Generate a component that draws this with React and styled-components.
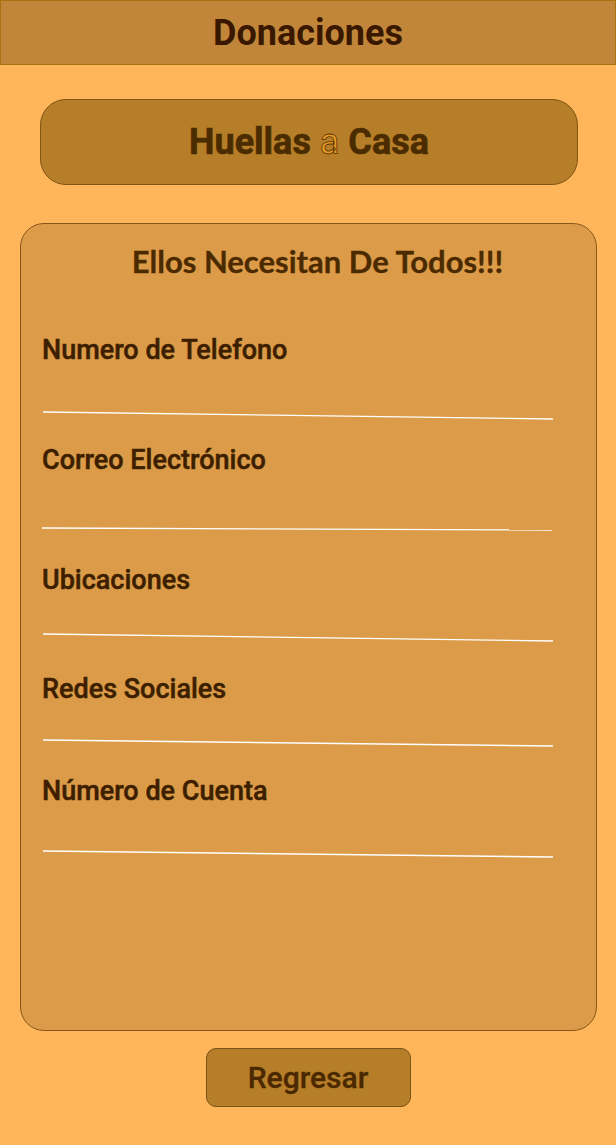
import styled, { createGlobalStyle } from 'styled-components'

const Global = createGlobalStyle`
  body {
    margin: 0;
    background: #ffb55a;
    font-family: Roboto, "Liberation Sans", sans-serif;
  }
`
const Page = styled.div`
  display: flex;
  flex-direction: column;
  min-height: 1145px;
`
const Header = styled.header`
  height: 63px;
  display: flex;
  align-items: center;
  justify-content: center;
  background: #c1863a;
  border: 1px solid #a8720f;
`
const HeaderTitle = styled.h1`
  margin: 0;
  font-size: 36px;
  font-weight: 700;
  color: #3a1800;
`
const Brand = styled.div`
  margin: 34px 0 0 40px;
  width: 536px;
  height: 84px;
  display: flex;
  align-items: center;
  justify-content: center;
  background: #b77e29;
  border: 1px solid #7f5414;
  border-radius: 26px;
`
const BrandText = styled.h2`
  margin: 0;
  font-size: 36px;
  font-weight: 700;
  color: #4a2c00;
  -webkit-text-stroke: 0.6px #4a2c00;
`
const Accent = styled.span`
  font-weight: 400;
  color: #e99a25;
  -webkit-text-stroke: 0.8px #5a3400;
`
const Card = styled.section`
  margin: 38px 0 0 20px;
  width: 575px;
  height: 786px;
  box-sizing: content-box;
  background: #db9b48;
  border: 1px solid #87581a;
  border-radius: 24px;
  padding-top: 20px;
  display: flex;
  flex-direction: column;
`
const CardTitle = styled.h3`
  margin: 0 0 0 18px;
  text-align: center;
  font-family: Lato, "Open Sans", sans-serif;
  font-size: 31px;
  font-weight: 700;
  line-height: 34px;
  color: #4b2a00;
  -webkit-text-stroke: 0.3px #4b2a00;
`
const Fields = styled.div`
  display: flex;
  flex-direction: column;
  padding: 0 0 0 21px;
`
const Field = styled.div`
  display: flex;
  flex-direction: column;
  margin-top: ${(p) => p.$top}px;
`
const Label = styled.label`
  font-size: 27px;
  font-weight: 500;
  line-height: 28px;
  color: #3d1f00;
  -webkit-text-stroke: 0.5px #3d1f00;
`
const Line = styled.svg`
  display: block;
  margin-top: ${(p) => p.$gap}px;
  width: 512px;
  height: 10px;
`
const Footer = styled.div`
  display: flex;
  justify-content: center;
  margin-top: 17px;
`
const Button = styled.button`
  width: 205px;
  height: 59px;
  background: #b77e29;
  border: 1px solid #7a5316;
  border-radius: 10px;
  font-family: Roboto, "Liberation Sans", sans-serif;
  font-size: 30px;
  font-weight: 500;
  color: #4a2800;
  -webkit-text-stroke: 0.3px #4a2800;
`

function App() {
  const fields = [
    { id: 1, text: 'Numero de Telefono', top: 58, gap: 47, x: 1, y1: 1, y2: 8 },
    { id: 2, text: 'Correo Electrónico', top: 25, gap: 53, x: 0, y1: 1, y2: 3 },
    { id: 3, text: 'Ubicaciones', top: 29, gap: 39, x: 1, y1: 1, y2: 8 },
    { id: 4, text: 'Redes Sociales', top: 32, gap: 36, x: 1, y1: 1, y2: 7 },
    { id: 5, text: 'Número de Cuenta', top: 28, gap: 45, x: 1, y1: 1, y2: 7 }
  ]
  return (
    <Page>
      <Global />
      <Header>
        <HeaderTitle>Donaciones</HeaderTitle>
      </Header>
      <Brand>
        <BrandText>
          Huellas <Accent>a</Accent> Casa
        </BrandText>
      </Brand>
      <Card>
        <CardTitle>Ellos Necesitan De Todos!!!</CardTitle>
        <Fields>
          {fields.map((f) => (
            <Field key={f.id} $top={f.top}>
              <Label>{f.text}</Label>
              <Line $gap={f.gap} viewBox='0 0 512 10'>
                <line
                  x1={f.x}
                  y1={f.y1}
                  x2={f.x + 510}
                  y2={f.y2}
                  stroke='#ffffff'
                  strokeWidth='1.4'
                />
              </Line>
            </Field>
          ))}
        </Fields>
      </Card>
      <Footer>
        <Button>Regresar</Button>
      </Footer>
    </Page>
  )
}

export default App
